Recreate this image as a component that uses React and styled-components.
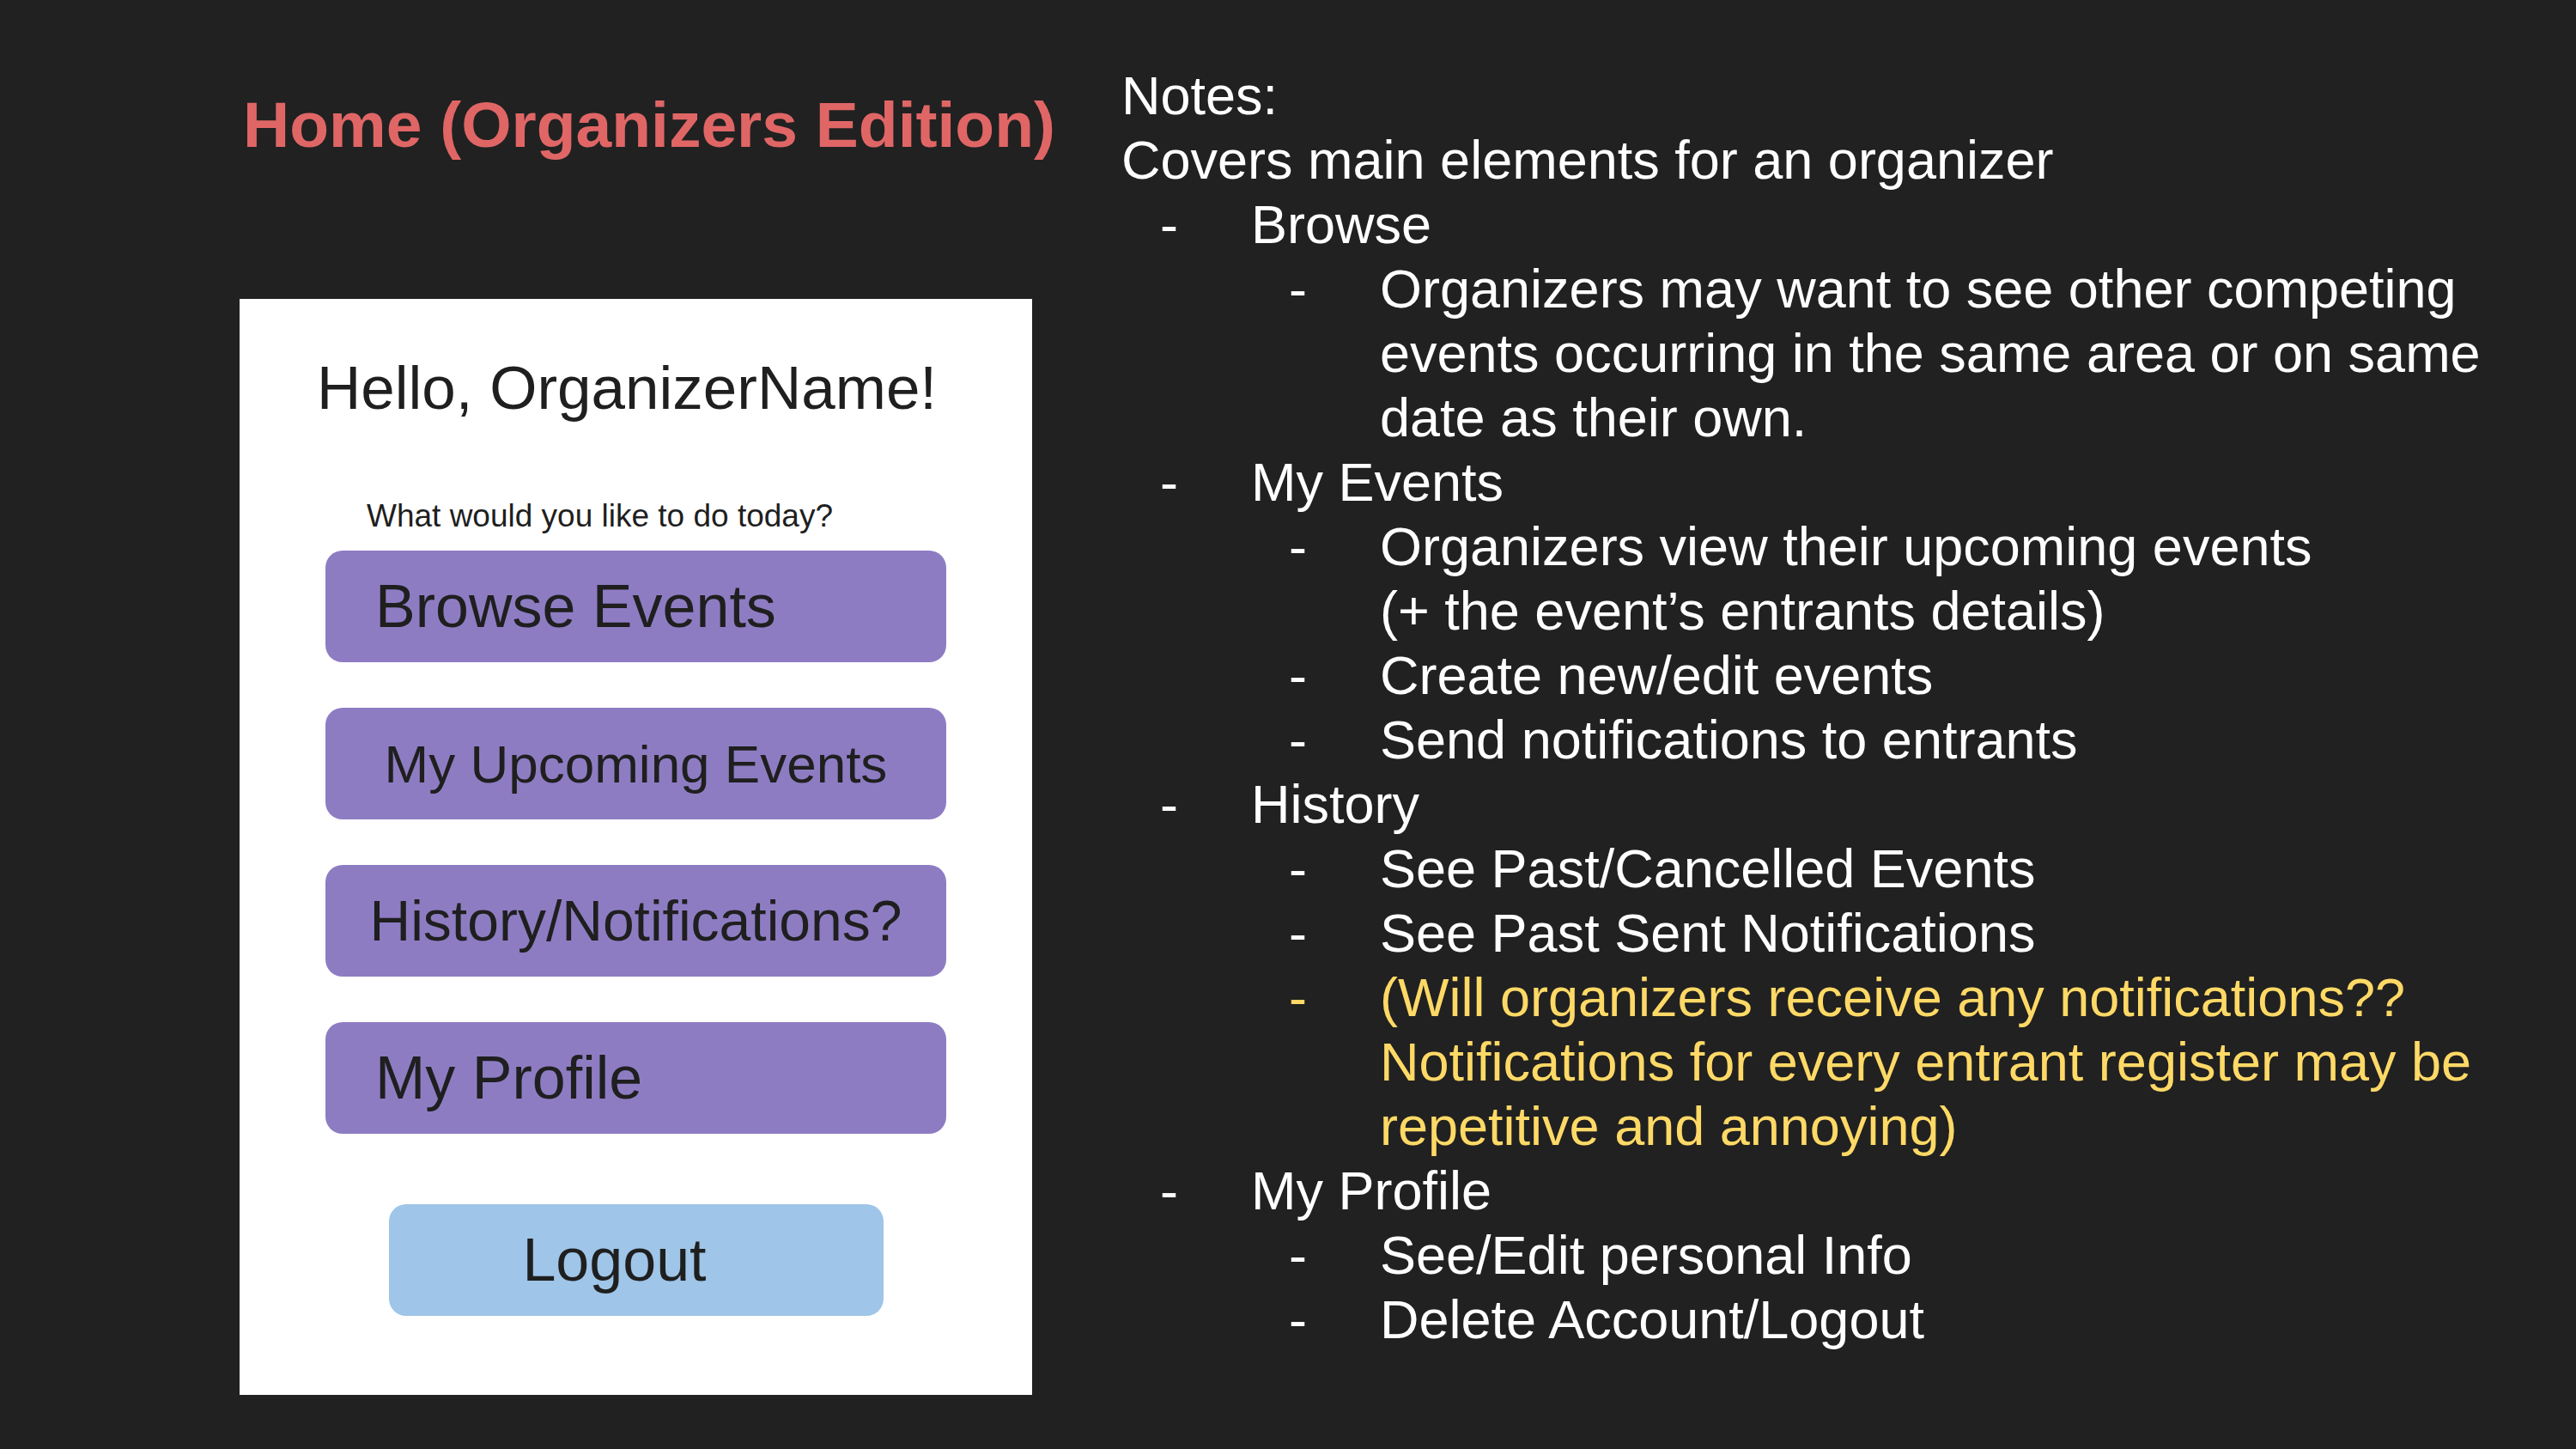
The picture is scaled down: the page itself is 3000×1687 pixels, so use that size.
import React from "react";
import styled, { createGlobalStyle } from "styled-components";

const GlobalStyle = createGlobalStyle`
  html, body {
    margin: 0;
    padding: 0;
    background: #212121;
  }
  body {
    font-family: "Liberation Sans", Arial, sans-serif;
  }
`;

const Slide = styled.div`
  width: 3000px;
  height: 1687px;
  background: #212121;
  display: flex;
  padding-left: 279px;
  gap: 104px;
  box-sizing: border-box;
  overflow: hidden;
`;

const LeftColumn = styled.div`
  width: 923px;
  padding-top: 107px;
  display: flex;
  flex-direction: column;
`;

const Title = styled.h1`
  margin: 0 0 0 4px;
  font-size: 75px;
  line-height: 76px;
  font-weight: 700;
  color: #e06666;
  white-space: nowrap;
`;

const Phone = styled.div`
  margin-top: 165px;
  height: 1276px;
  background: #ffffff;
  box-sizing: border-box;
  padding: 61px 100px 0;
  display: flex;
  flex-direction: column;
  color: #1f1f1f;
`;

const Greeting = styled.div`
  margin-left: -10px;
  font-size: 71px;
  line-height: 85px;
  white-space: nowrap;
`;

const Prompt = styled.div`
  margin: 85px 0 18px 48px;
  font-size: 37px;
  line-height: 44px;
  white-space: nowrap;
`;

const Menu = styled.div`
  display: flex;
  flex-direction: column;
  gap: 53px;
`;

const MenuButton = styled.div`
  height: 130px;
  border-radius: 20px;
  background: ${(p) => p.$bg || "#8e7cc3"};
  display: flex;
  align-items: center;
  justify-content: ${(p) => (p.$align === "left" ? "flex-start" : "center")};
  padding-left: ${(p) => (p.$align === "left" ? "58px" : "0")};
  font-size: ${(p) => p.$size || 70}px;
  white-space: nowrap;
  box-sizing: border-box;
`;

const LogoutButton = styled(MenuButton)`
  width: 576px;
  align-self: center;
  margin-top: 82px;
  padding-right: 50px;
`;

const Notes = styled.div`
  padding-top: 74px;
  color: #ffffff;
  font-size: 63px;
  line-height: 75px;
  white-space: nowrap;
`;

const NoteLine = styled.div``;

const Item = styled.div`
  display: grid;
  grid-template-columns: 106px auto;
  padding-left: ${(p) => (p.$level === 2 ? 195 : 45)}px;
  color: ${(p) => p.$color || "#ffffff"};
`;

const Dash = styled.span``;

const Bullet = ({ level = 1, color, children }) => (
  <Item $level={level} $color={color}>
    <Dash>-</Dash>
    <span>{children}</span>
  </Item>
);

const App = () => {
  return (
    <>
      <GlobalStyle />
      <Slide>
        <LeftColumn>
          <Title>Home (Organizers Edition)</Title>
          <Phone>
            <Greeting>Hello, OrganizerName!</Greeting>
            <Prompt>What would you like to do today?</Prompt>
            <Menu>
              <MenuButton $align="left">Browse Events</MenuButton>
              <MenuButton $size={62}>My Upcoming Events</MenuButton>
              <MenuButton $size={66}>History/Notifications?</MenuButton>
              <MenuButton $align="left" $size={70}>
                My Profile
              </MenuButton>
            </Menu>
            <LogoutButton $bg="#9fc5e8">Logout</LogoutButton>
          </Phone>
        </LeftColumn>

        <Notes>
          <NoteLine>Notes:</NoteLine>
          <NoteLine>Covers main elements for an organizer</NoteLine>
          <Bullet>Browse</Bullet>
          <Bullet level={2}>
            Organizers may want to see other competing
            <br />
            events occurring in the same area or on same
            <br />
            date as their own.
          </Bullet>
          <Bullet>My Events</Bullet>
          <Bullet level={2}>
            Organizers view their upcoming events
            <br />
            (+ the event’s entrants details)
          </Bullet>
          <Bullet level={2}>Create new/edit events</Bullet>
          <Bullet level={2}>Send notifications to entrants</Bullet>
          <Bullet>History</Bullet>
          <Bullet level={2}>See Past/Cancelled Events</Bullet>
          <Bullet level={2}>See Past Sent Notifications</Bullet>
          <Bullet level={2} color="#ffd966">
            (Will organizers receive any notifications??
            <br />
            Notifications for every entrant register may be
            <br />
            repetitive and annoying)
          </Bullet>
          <Bullet>My Profile</Bullet>
          <Bullet level={2}>See/Edit personal Info</Bullet>
          <Bullet level={2}>Delete Account/Logout</Bullet>
        </Notes>
      </Slide>
    </>
  );
};

export default App;
